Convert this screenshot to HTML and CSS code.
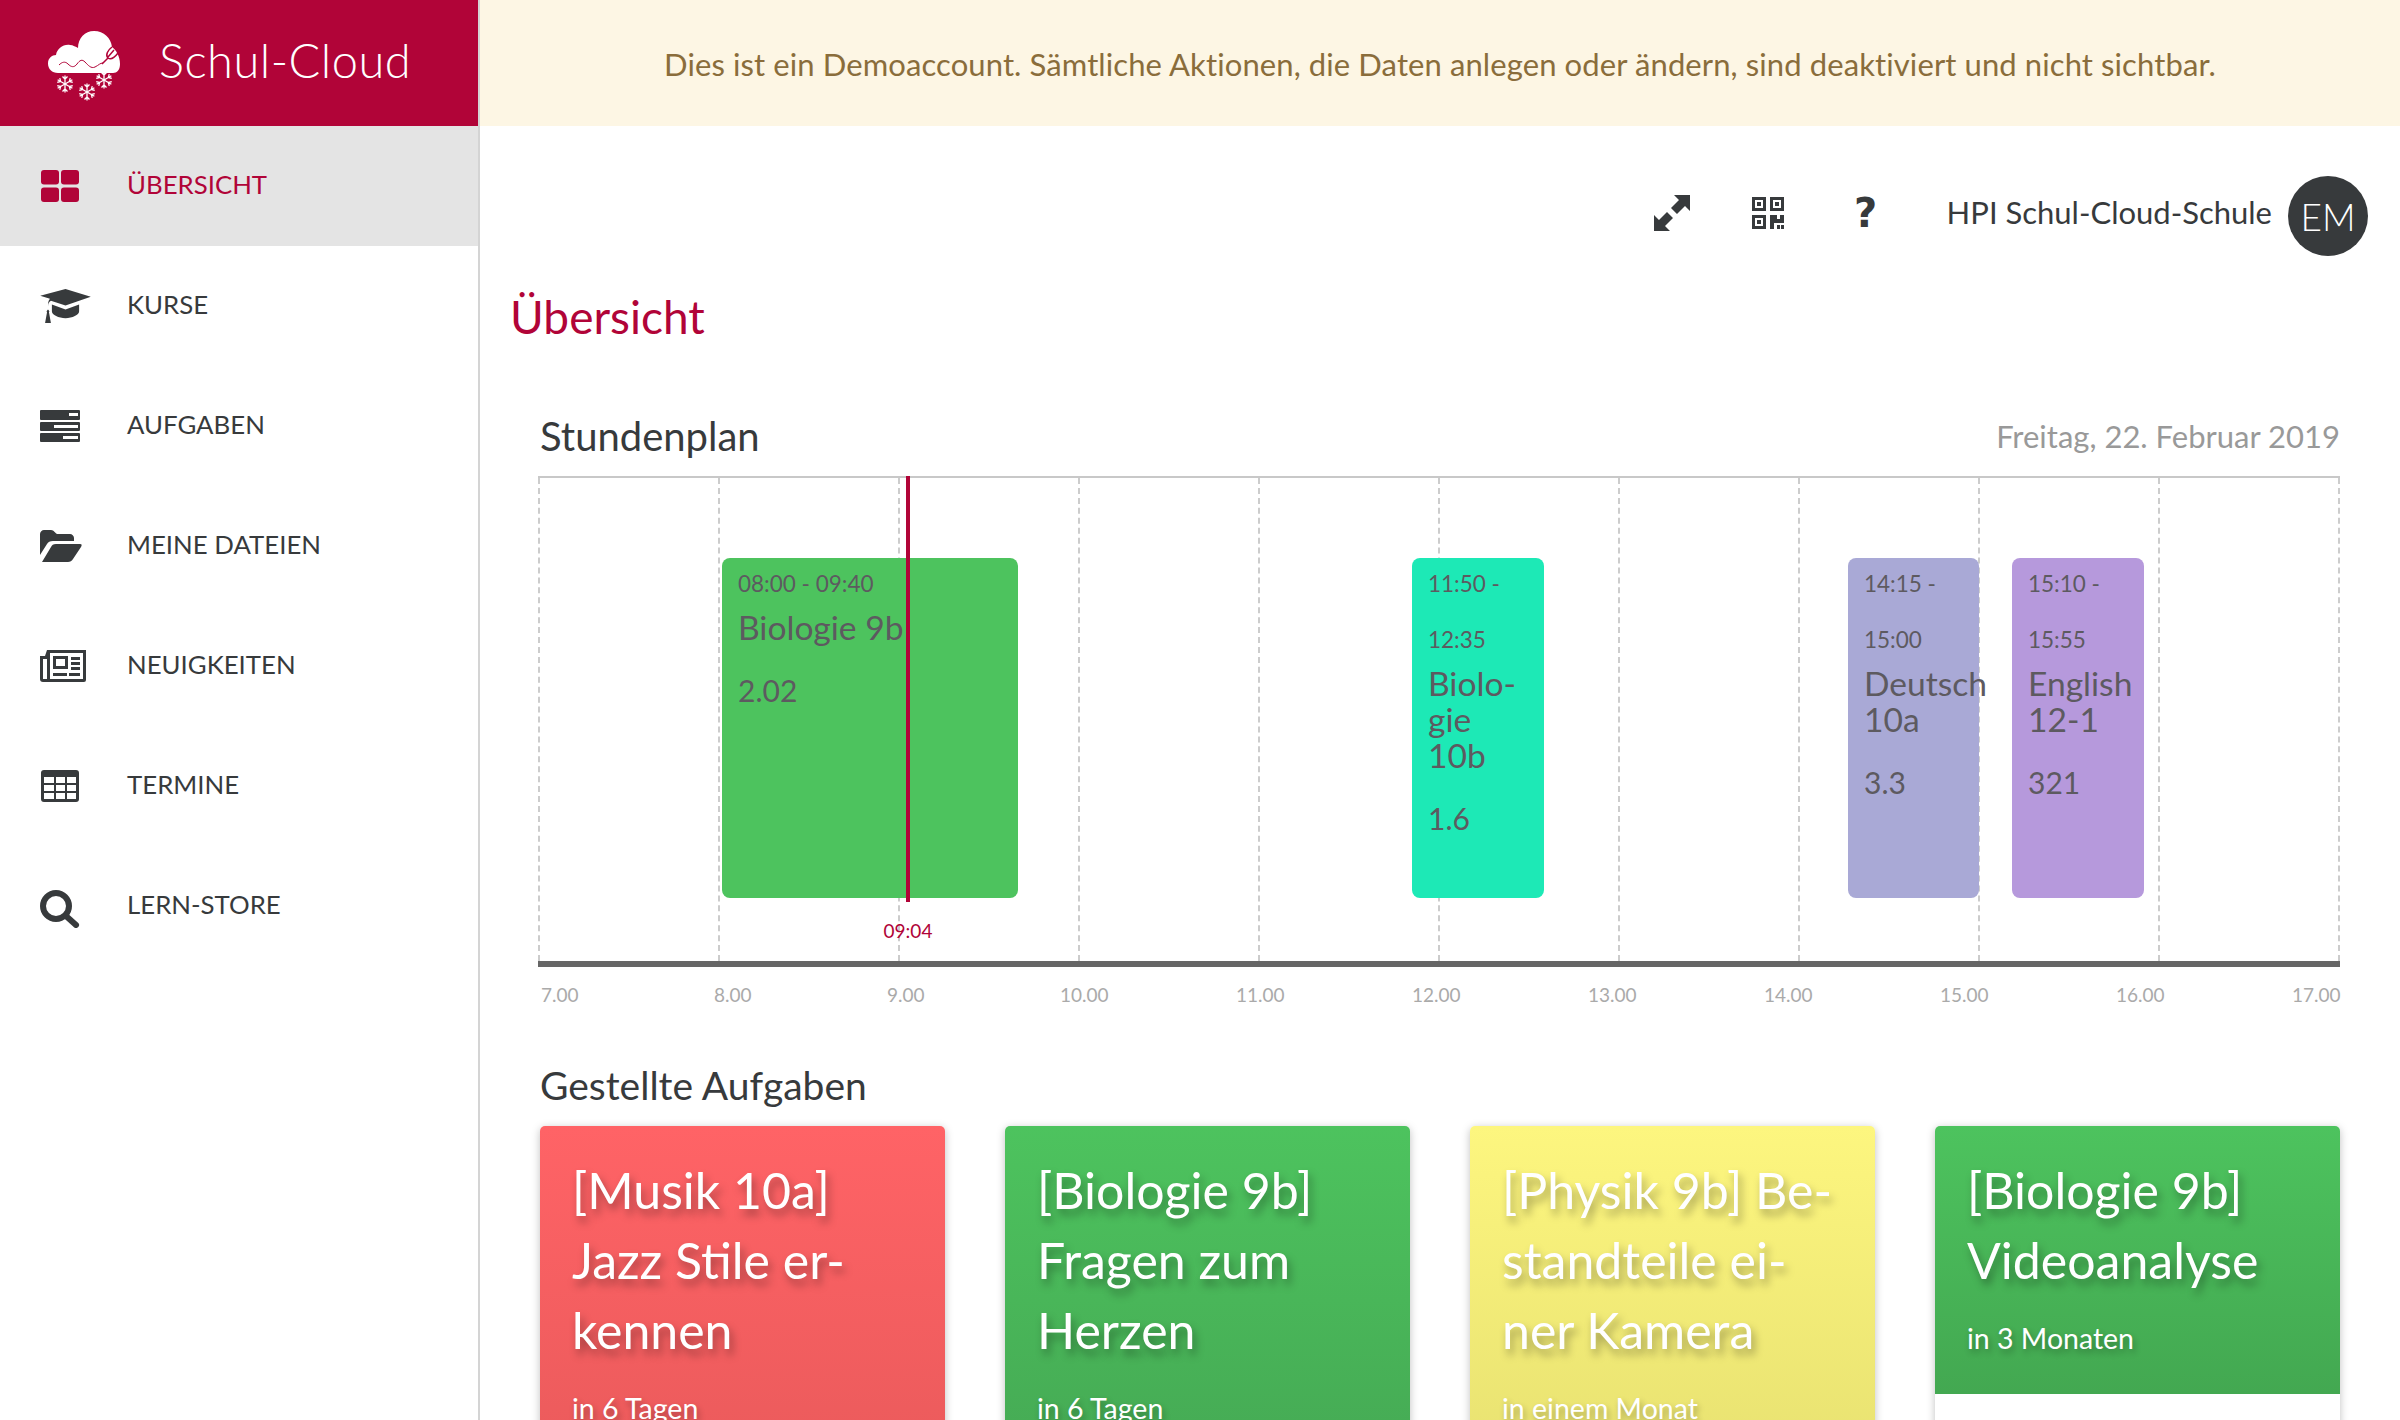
FILE: index.html
```html
<!DOCTYPE html>
<html>
<head>
    <meta charset="utf-8">
    <title>Schul-Cloud</title>
    <link rel="stylesheet" href="styles.css">
</head>
<body>
    <div class="page">
        <aside class="sidebar">
            <div class="logo">
                <svg class="logo-icon" viewBox="0 0 74 72">
                    <defs>
                        <g id="arm"><path d="M0 0V-8.500M-2.500 -7.500L0 -5L2.500 -7.500"/></g>
                        <g id="flake">
                            <use href="#arm"/>
                            <use href="#arm" transform="rotate(60)"/>
                            <use href="#arm" transform="rotate(120)"/>
                            <use href="#arm" transform="rotate(180)"/>
                            <use href="#arm" transform="rotate(240)"/>
                            <use href="#arm" transform="rotate(300)"/>
                        </g>
                    </defs>
                    <path fill="#fff" d="M11 44C5 44 1 40 1 34.500C1 29 5 26 9 26C10 20 16 15 23 16C26 16 29 18 31 19C31 9 38 2 47 2C57 2 64 9 65 18C69 21 73 27 73 35C73 41 70 44 66 44Z"/>
                    <path fill="none" stroke="#b10438" stroke-width="1" d="M12 36C15 33 18 32 21 35S27 39 30 35S35 30 38 33S44 40 48 38S53 34 56 34"/>
                    <path fill="none" stroke="#b10438" stroke-width="1.500" d="M55 35L61 29M61 29C58 26 61 21 65 18M61 29C64 31 68 28 71 24M61 28L67 21"/>
                    <g fill="none" stroke="#fff" stroke-width="1.300">
                        <use href="#flake" transform="translate(18 55)"/>
                        <use href="#flake" transform="translate(40 63)"/>
                        <use href="#flake" transform="translate(57 51)"/>
                    </g>
                </svg>
                <span class="logo-text">Schul-Cloud</span>
            </div>
            <nav class="nav">
                <a class="nav-item active">
                    <span class="nav-slot"><svg width="40" height="32" viewBox="0 0 40 32"><g fill="currentColor"><rect x="1" y="0" width="18" height="14.500" rx="3"/><rect x="21" y="0" width="18" height="14.500" rx="3"/><rect x="1" y="17.500" width="18" height="14.500" rx="3"/><rect x="21" y="17.500" width="18" height="14.500" rx="3"/></g></svg></span>
                    ÜBERSICHT
                </a>
                <a class="nav-item">
                    <span class="nav-slot"><svg class="hat" width="51" height="35" viewBox="0 0 52 36"><path fill="currentColor" d="M26 0l26 8l-26 9l-15 -5c-2 1 -3 3 -3 6v3c1 1 2 2 1 3l2 11h-6l2 -11c-1 -1 0 -2 1 -3v-3c0 -3 0 -6 2 -8l-10 -3zM12 16l14 5l14 -5v7c0 4 -7 7 -14 7s-14 -3 -14 -7z"/></svg></span>
                    KURSE
                </a>
                <a class="nav-item">
                    <span class="nav-slot"><svg width="40" height="32" viewBox="0 0 40 32"><path fill="currentColor" fill-rule="evenodd" d="M1 0h38a1 1 0 0 1 1 1v8a1 1 0 0 1 -1 1h-38a1 1 0 0 1 -1 -1v-8a1 1 0 0 1 1 -1zM29 3v3h9v-3zM1 12h38a1 1 0 0 1 1 1v7a1 1 0 0 1 -1 1h-38a1 1 0 0 1 -1 -1v-7a1 1 0 0 1 1 -1zM14 15v3h24v-3zM1 23h38a1 1 0 0 1 1 1v7a1 1 0 0 1 -1 1h-38a1 1 0 0 1 -1 -1v-7a1 1 0 0 1 1 -1zM23 26v3h15v-3z"/></svg></span>
                    AUFGABEN
                </a>
                <a class="nav-item">
                    <span class="nav-slot"><svg width="42" height="32" viewBox="0 0 42 32"><path fill="currentColor" d="M0 25v-21c0 -2 2 -4 4 -4h7c3 0 4 3 6 4h13c2 0 4 2 4 4v3h-21c-3 0 -5 1 -6 3zM2 32l9 -15c1 -2 2 -3 5 -3h24c2 0 2 1 1 3l-8 12c-1 2 -3 3 -5 3z"/></svg></span>
                    MEINE DATEIEN
                </a>
                <a class="nav-item">
                    <span class="nav-slot"><svg width="46" height="32" viewBox="0 0 46 32"><path fill="currentColor" fill-rule="evenodd" d="M7 0h39v30a2 2 0 0 1 -2 2h-41a3 3 0 0 1 -3 -3v-23h5zM10 3v26h33v-26zM3 9v20h4v-20zM13 6h15v13h-15zM16 9v7h9v-7zM31 7h9v3h-9zM31 12h9v3h-9zM31 17h9v3h-9zM13 23h14v3h-14zM29 23h11v3h-11z"/></svg></span>
                    NEUIGKEITEN
                </a>
                <a class="nav-item">
                    <span class="nav-slot"><svg width="40" height="32" viewBox="0 0 40 32"><path fill="currentColor" fill-rule="evenodd" d="M4 0h32a3 3 0 0 1 3 3v26a3 3 0 0 1 -3 3h-32a3 3 0 0 1 -3 -3v-26a3 3 0 0 1 3 -3zM4 7v6h10v-6zM16 7v6h9v-6zM27 7v6h9v-6zM4 15v6h10v-6zM16 15v6h9v-6zM27 15v6h9v-6zM4 23v6h10v-6zM16 23v6h9v-6zM27 23v6h9v-6z"/></svg></span>
                    TERMINE
                </a>
                <a class="nav-item">
                    <span class="nav-slot"><svg class="search" width="40" height="38" viewBox="0 0 40 38"><circle cx="16" cy="16" r="13" fill="none" stroke="currentColor" stroke-width="6"/><path stroke="currentColor" stroke-width="6" stroke-linecap="round" d="M26 26l10 9"/></svg></span>
                    LERN-STORE
                </a>
            </nav>
        </aside>

        <div class="main">
            <div class="demo-banner">Dies ist ein Demoaccount. Sämtliche Aktionen, die Daten anlegen oder ändern, sind deaktiviert und nicht sichtbar.</div>
            <div class="content">
                <div class="topbar">
                    <svg class="top-icon fullscreen" viewBox="0 0 36 36"><path fill="#373a3c" d="M20 0H36V16L31 11L23 19L17 13L25 5ZM0 36V20L5 25L13 17L19 23L11 31L16 36Z"/></svg>
                    <svg class="top-icon qr" viewBox="0 0 32 32"><path fill="#373a3c" fill-rule="evenodd" d="M0 0h14v14h-14zM3 3v8h8v-8zM5 5h4v4h-4zM18 0h14v14h-14zM21 3v8h8v-8zM23 5h4v4h-4zM0 18h14v14h-14zM3 21v8h8v-8zM5 23h4v4h-4zM18 18h7v4h3v-4h4v8h-10v6h-4zM25 28h3v4h-3zM29 28h3v4h-3z"/></svg>
                    <span class="help">?</span>
                    <span class="school">HPI Schul-Cloud-Schule</span>
                    <span class="avatar">EM</span>
                </div>

                <h1 class="page-title">Übersicht</h1>

                <section class="schedule">
                    <div class="section-head">
                        <h2>Stundenplan</h2>
                        <span class="date">Freitag, 22. Februar 2019</span>
                    </div>
                    <div class="timeline">
                        <div class="hours">
                            <i></i><i></i><i></i><i></i><i></i><i></i><i></i><i></i><i></i><i></i>
                        </div>
                        <div class="lesson green" style="left: 184px; width: 296px;">
                            <div class="lesson-time">08:00 - 09:40</div>
                            <div class="lesson-name">Biologie 9b</div>
                            <div class="lesson-room">2.02</div>
                        </div>
                        <div class="lesson teal" style="left: 874px; width: 132px;">
                            <div class="lesson-time wrap">11:50 -<br>12:35</div>
                            <div class="lesson-name">Biolo-<br>gie<br>10b</div>
                            <div class="lesson-room">1.6</div>
                        </div>
                        <div class="lesson blue" style="left: 1310px; width: 131px;">
                            <div class="lesson-time wrap">14:15 -<br>15:00</div>
                            <div class="lesson-name">Deutsch<br>10a</div>
                            <div class="lesson-room">3.3</div>
                        </div>
                        <div class="lesson purple" style="left: 1474px; width: 132px;">
                            <div class="lesson-time wrap">15:10 -<br>15:55</div>
                            <div class="lesson-name">English<br>12-1</div>
                            <div class="lesson-room">321</div>
                        </div>
                        <div class="now-line"></div>
                        <div class="now-label">09:04</div>
                    </div>
                    <div class="axis">
                        <span>7.00</span><span>8.00</span><span>9.00</span><span>10.00</span><span>11.00</span><span>12.00</span><span>13.00</span><span>14.00</span><span>15.00</span><span>16.00</span><span>17.00</span>
                    </div>
                </section>

                <section class="tasks">
                    <h2>Gestellte Aufgaben</h2>
                    <div class="task-grid">
                        <div class="task-card red">
                            <div class="task-title">[Musik 10a]<br>Jazz Stile er-<br>kennen</div>
                            <div class="task-due">in 6 Tagen</div>
                        </div>
                        <div class="task-card green-card">
                            <div class="task-title">[Biologie 9b]<br>Fragen zum<br>Herzen</div>
                            <div class="task-due">in 6 Tagen</div>
                        </div>
                        <div class="task-card yellow">
                            <div class="task-title">[Physik 9b] Be-<br>standteile ei-<br>ner Kamera</div>
                            <div class="task-due">in einem Monat</div>
                        </div>
                        <div class="task-card green-card short">
                            <div class="task-title">[Biologie 9b]<br>Videoanalyse</div>
                            <div class="task-due">in 3 Monaten</div>
                            <div class="task-foot">Abgabe bald</div>
                        </div>
                    </div>
                </section>
            </div>
        </div>
    </div>
</body>
</html>
```
FILE: styles.css
```css
html, body {
    margin: 0;
    padding: 0;
    height: 100%;
    overflow: hidden;
}
body {
    background-color: #fff;
    color: #373a3c;
    font-family: "Lato", "Noto Sans", sans-serif;
}
.page {
    display: flex;
    height: 1420px;
    overflow: hidden;
}

/* sidebar */
.sidebar {
    width: 478px;
    flex-shrink: 0;
    border-right: 2px solid #d4d4d4;
}
.logo {
    display: flex;
    height: 126px;
    background-color: #b10438;
    color: #fff;
    padding: 29px 0 0 47px;
    box-sizing: border-box;
}
.logo-icon {
    width: 74px;
    height: 72px;
}
.logo-text {
    margin-left: 38px;
    font-size: 47px;
    line-height: 62px;
    font-weight: 300;
    letter-spacing: 0.5px;
}
.nav {
    display: flex;
    flex-direction: column;
}
.nav-item {
    display: flex;
    align-items: center;
    height: 120px;
    padding: 0 0 5px 40px;
    box-sizing: border-box;
    font-size: 25.8px;
    color: #373a3c;
}
.nav-item.active {
    background-color: #e4e4e4;
    color: #b10438;
}
.nav-slot {
    display: flex;
    width: 87px;
    flex-shrink: 0;
    padding-top: 5px;
}
.search {
    margin-top: 6px;
}

/* main column */
.main {
    flex: 1;
    min-width: 0;
}
.demo-banner {
    height: 126px;
    padding-top: 2px;
    box-sizing: border-box;
    display: flex;
    align-items: center;
    justify-content: center;
    background-color: #fdf6e4;
    color: #8a6d3b;
    font-size: 31px;
    letter-spacing: 0.1px;
}
.content {
    padding: 0 60px 0 31px;
}
.topbar {
    display: flex;
    align-items: center;
    justify-content: flex-end;
    height: 80px;
    padding-top: 50px;
    margin-right: -28px;
}
.top-icon {
    flex-shrink: 0;
    margin-bottom: 6px;
}
.fullscreen {
    width: 36px;
    height: 36px;
    margin-right: 62px;
}
.qr {
    width: 32px;
    height: 32px;
    margin-right: 70px;
}
.help {
    width: 24px;
    margin: 0 69px 6px 0;
    font-family: "DejaVu Sans", sans-serif;
    font-size: 40px;
    font-weight: 700;
    text-align: center;
}
.school {
    font-size: 31px;
    margin: 0 16px 8px 0;
}
.avatar {
    width: 80px;
    height: 80px;
    border-radius: 50%;
    display: flex;
    align-items: center;
    justify-content: center;
    background-color: #373a3c;
    color: #fff;
    font-size: 37px;
    font-weight: 300;
}
.page-title {
    margin: 31px 0 0 -1px;
    font-size: 46px;
    font-weight: 400;
    color: #b10438;
    line-height: 60px;
}

/* schedule */
.schedule {
    margin: 64px 0 0 29px;
}
.section-head {
    display: flex;
    justify-content: space-between;
    height: 65px;
}
h2 {
    margin: 0;
    font-size: 40px;
    font-weight: 400;
    line-height: 50px;
}
.date {
    font-size: 31px;
    line-height: 50px;
    color: #999;
}
.timeline {
    position: relative;
    height: 483px;
    border-top: 2px solid #c8c8c8;
    margin-left: -2px;
}
.hours {
    display: grid;
    grid-template-columns: repeat(10, 1fr);
    height: 100%;
    border-left: 2px dashed #ccc;
}
.hours i {
    border-right: 2px dashed #ccc;
}
.lesson {
    position: absolute;
    top: 80px;
    height: 340px;
    padding: 12px 16px;
    box-sizing: border-box;
    border-radius: 8px;
    color: #5d5a60;
    white-space: nowrap;
}
.green { background-color: #4dc35e; }
.teal { background-color: #1de9b6; }
.blue { background-color: #a9a9d6; }
.purple { background-color: #b699dc; }
.lesson-time {
    font-size: 22.5px;
    line-height: 28px;
}
.lesson-time.wrap {
    line-height: 56px;
    margin: -14px 0 -14px;
}
.lesson-name {
    font-size: 33.6px;
    line-height: 36px;
    margin-top: 11px;
}
.lesson-room {
    font-size: 30px;
    margin-top: 27px;
    line-height: 36px;
}
.now-line {
    position: absolute;
    left: 368px;
    top: -2px;
    bottom: 59px;
    width: 4px;
    background-color: #b10438;
}
.now-label {
    position: absolute;
    left: 340px;
    width: 60px;
    top: 441px;
    text-align: center;
    font-size: 19px;
    color: #b10438;
}
.axis {
    display: flex;
    justify-content: space-between;
    margin-left: -2px;
    padding: 16px 0 0 3px;
    border-top: 6px solid #666;
    font-size: 19px;
    line-height: 24px;
    color: #aaa;
}
.axis span {
    width: 48px;
}
.axis span:nth-child(-n+3) {
    width: 45px;
}

/* tasks */
.tasks {
    margin: 53px 0 0 29px;
}
.tasks h2 {
    font-size: 39px;
}
.task-grid {
    display: grid;
    grid-template-columns: repeat(4, 405px);
    justify-content: space-between;
    margin-top: 16px;
}
.task-card {
    height: 600px;
    padding: 29px 32px;
    box-sizing: border-box;
    border-radius: 5px 5px 0 0;
    color: #fff;
    box-shadow: 0 2px 8px rgba(0, 0, 0, 0.25);
}
.red { background: linear-gradient(#ff6366, #e25757 80%); }
.green-card { background: linear-gradient(#4dc35e, #429f50 80%); }
.yellow { background: linear-gradient(#fdf67f, #dfd96b 80%); }
.task-title {
    font-size: 50px;
    line-height: 70px;
    white-space: nowrap;
    text-shadow: 3px 6px 8px rgba(0, 0, 0, 0.35);
}
.task-due {
    font-size: 28.5px;
    margin-top: 26px;
    text-shadow: 2px 4px 6px rgba(0, 0, 0, 0.3);
}
.task-card.short {
    background: linear-gradient(#4dc35e, #43a851 268px, #fff 268px);
}
.task-foot {
    margin-top: 61px;
    font-size: 25px;
    color: #666;
}
```
